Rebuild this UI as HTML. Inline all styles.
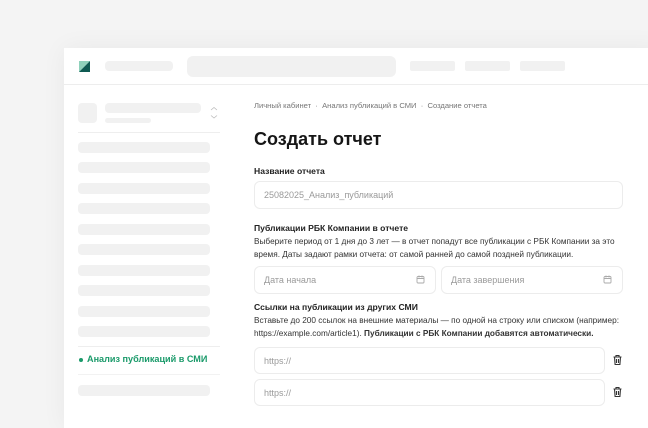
<!DOCTYPE html>
<html><head><meta charset="utf-8"><style>
*{margin:0;padding:0;box-sizing:border-box}
body{width:648px;height:404px;overflow:hidden;background:#f4f4f4;font-family:"Liberation Sans","Noto Sans CJK SC",sans-serif;position:relative;color:#1a1a1a}
.a{position:absolute}
.card{left:64px;top:48px;width:600px;height:380px;background:#fff;box-shadow:0 0 24px rgba(0,0,0,0.05)}
.sk{position:absolute;background:#f1f1f1;border-radius:4px}
.t{position:absolute;white-space:nowrap}
.inp{position:absolute;border:1px solid #ececec;border-radius:6px;background:#fff;font-size:9px;color:#9a9a9a;padding-left:9px;display:flex;align-items:center}
.lbl{font-size:8.6px;font-weight:bold;color:#222}
.d{font-size:8.25px;color:#333;line-height:12.5px}
</style></head><body>
<div class="a card"></div>
<div class="a" style="left:64px;top:84px;width:584px;height:1px;background:#ededed"></div>
<svg class="a" style="left:79px;top:61px" width="11" height="11"><polygon points="0,0 11,0 0,11" fill="#8fd1bb"/><polygon points="11,0 11,11 0,11" fill="#0f5a52"/></svg>
<div class="sk" style="left:105px;top:61px;width:68px;height:10px"></div>
<div class="sk" style="left:187px;top:56px;width:209px;height:21px;border-radius:6px"></div>
<div class="sk" style="left:410px;top:61px;width:45px;height:10px;border-radius:2px"></div>
<div class="sk" style="left:465px;top:61px;width:45px;height:10px;border-radius:2px"></div>
<div class="sk" style="left:520px;top:61px;width:45px;height:10px;border-radius:2px"></div>

<div class="sk" style="left:78px;top:103px;width:19px;height:20px"></div>
<div class="sk" style="left:105px;top:103px;width:96px;height:10px"></div>
<div class="sk" style="left:105px;top:118px;width:46px;height:5px"></div>
<svg class="a" style="left:209px;top:106px" width="10" height="14" fill="none" stroke="#bbb" stroke-width="0.8"><path d="M2 4l3-2.5 3 2.5M2 9.5l3 2.5 3-2.5"/></svg>
<div class="a" style="left:78px;top:132px;width:142px;height:1px;background:#eee"></div>
<div class="sk" style="left:78px;top:142px;width:132px;height:11px"></div>
<div class="sk" style="left:78px;top:162px;width:132px;height:11px"></div>
<div class="sk" style="left:78px;top:183px;width:132px;height:11px"></div>
<div class="sk" style="left:78px;top:203px;width:132px;height:11px"></div>
<div class="sk" style="left:78px;top:224px;width:132px;height:11px"></div>
<div class="sk" style="left:78px;top:244px;width:132px;height:11px"></div>
<div class="sk" style="left:78px;top:265px;width:132px;height:11px"></div>
<div class="sk" style="left:78px;top:285px;width:132px;height:11px"></div>
<div class="sk" style="left:78px;top:306px;width:132px;height:11px"></div>
<div class="sk" style="left:78px;top:326px;width:132px;height:11px"></div>
<div class="a" style="left:78px;top:346px;width:142px;height:1px;background:#eee"></div>
<div class="a" style="left:79px;top:358px;width:4px;height:4px;border-radius:50%;background:#1a9a6a"></div>
<div class="t" style="left:87px;top:354px;font-size:9.1px;font-weight:bold;color:#1a9a6a">Анализ публикаций в СМИ</div>
<div class="a" style="left:78px;top:374px;width:142px;height:1px;background:#f2f2f2"></div>
<div class="sk" style="left:78px;top:385px;width:132px;height:11px"></div>

<div class="t" style="left:254px;top:101px;font-size:7.6px;color:#777">Личный кабинет &nbsp;·&nbsp; Анализ публикаций в СМИ &nbsp;·&nbsp; Создание отчета</div>
<div class="t" style="left:254px;top:129px;font-size:18px;font-weight:bold;color:#161616">Создать отчет</div>
<div class="t lbl" style="left:254px;top:166px">Название отчета</div>
<div class="inp" style="left:254px;top:181px;width:369px;height:28px">25082025_Анализ_публикаций</div>
<div class="t lbl" style="left:254px;top:223px">Публикации РБК Компании в отчете</div>
<div class="t d" style="left:254px;top:236px">Выберите период от 1 дня до 3 лет — в отчет попадут все публикации с РБК Компании за это<br>время. Даты задают рамки отчета: от самой ранней до самой поздней публикации.</div>
<div class="inp" style="left:254px;top:266px;width:182px;height:28px">Дата начала</div>
<div class="inp" style="left:441px;top:266px;width:182px;height:28px">Дата завершения</div>
<svg class="a" style="left:416px;top:275px" width="9" height="9" fill="none" stroke="#aaa" stroke-width="0.9"><rect x="1" y="1.5" width="7" height="6.5" rx="1"/><path d="M1 3.5h7M3 0.5v2M6 0.5v2"/></svg>
<svg class="a" style="left:603px;top:275px" width="9" height="9" fill="none" stroke="#aaa" stroke-width="0.9"><rect x="1" y="1.5" width="7" height="6.5" rx="1"/><path d="M1 3.5h7M3 0.5v2M6 0.5v2"/></svg>
<div class="t lbl" style="left:254px;top:302px">Ссылки на публикации из других СМИ</div>
<div class="t d" style="left:254px;top:315px">Вставьте до 200 ссылок на внешние материалы — по одной на строку или списком (например:<br>https://example.com/article1). <b>Публикации с РБК Компании добавятся автоматически.</b></div>
<div class="inp" style="left:254px;top:347px;width:351px;height:27px">https://</div>
<div class="inp" style="left:254px;top:379px;width:351px;height:27px">https://</div>
<svg class="a" style="left:612px;top:354px" width="11" height="12" fill="none" stroke="#333" stroke-width="1.1"><path d="M1.5 3h8M4 3V1.5h3V3M2.5 3l.6 7.5h4.8L8.5 3M4.5 5v4M6.5 5v4"/></svg>
<svg class="a" style="left:612px;top:386px" width="11" height="12" fill="none" stroke="#333" stroke-width="1.1"><path d="M1.5 3h8M4 3V1.5h3V3M2.5 3l.6 7.5h4.8L8.5 3M4.5 5v4M6.5 5v4"/></svg>
</body></html>
